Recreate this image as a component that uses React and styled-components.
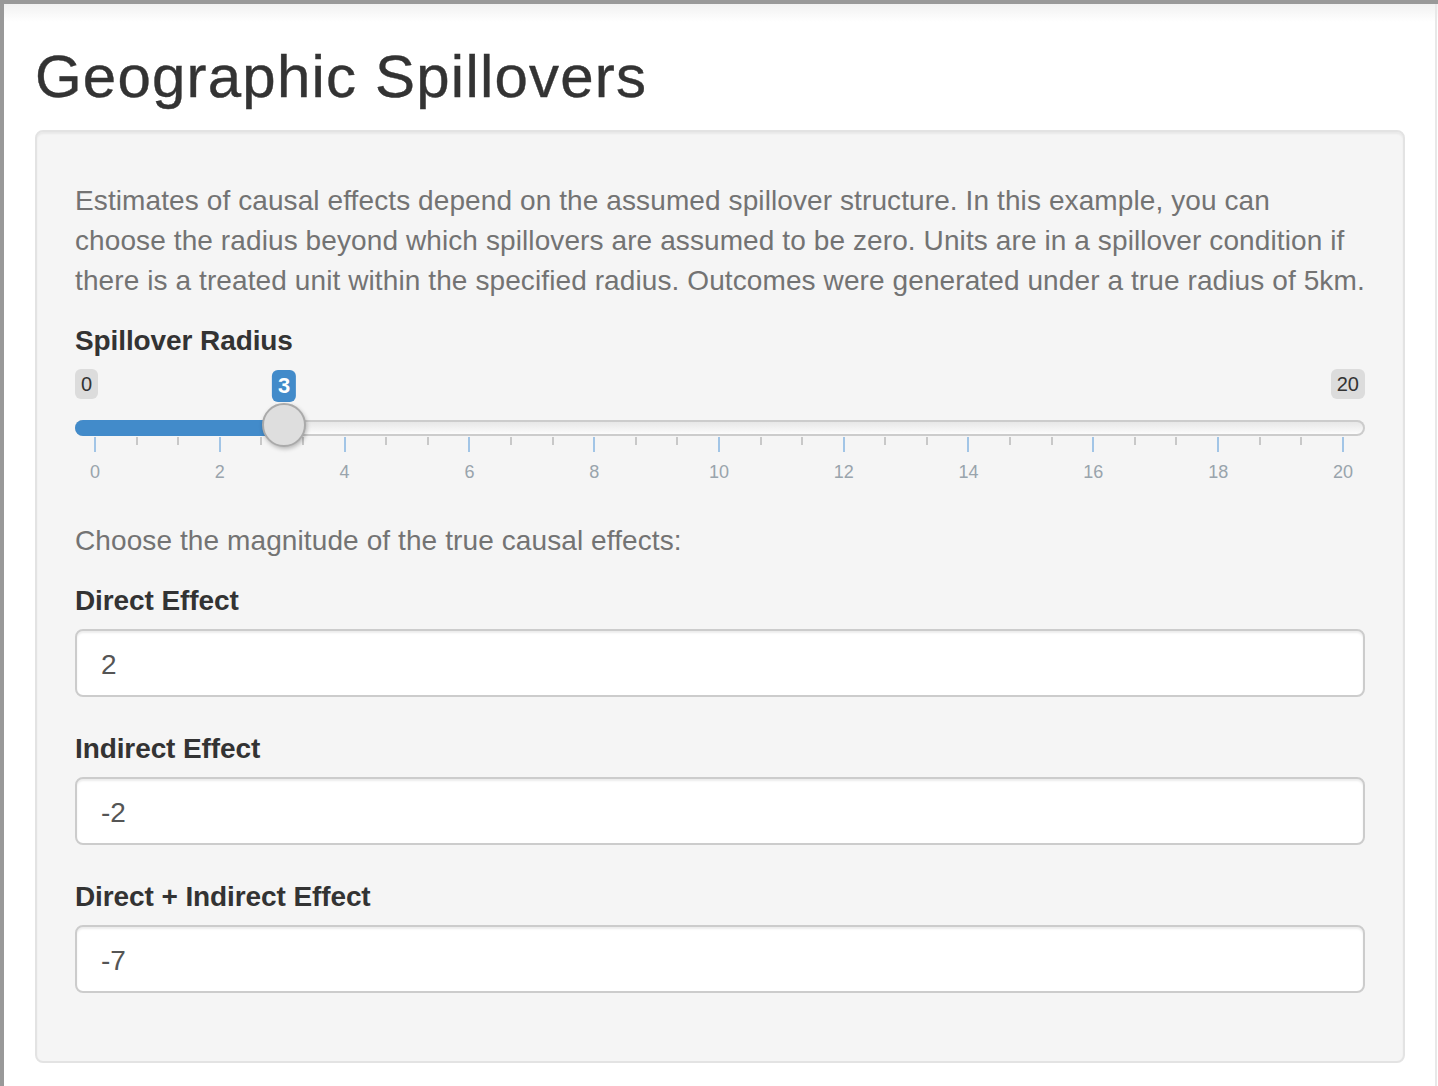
import styled, { createGlobalStyle } from "styled-components";

const GlobalStyle = createGlobalStyle`
  html, body {
    margin: 0;
    padding: 0;
    overflow: hidden;
    background: #fff;
  }
  * {
    box-sizing: border-box;
  }
`;

const Frame = styled.div`
  display: flex;
  min-height: 100vh;
  border-top: 4px solid #999;
  border-left: 4px solid #999;
  font-family: "Liberation Sans", Arial, sans-serif;
  color: #333;
  background: linear-gradient(#f1f1f1, #fff 18px);
`;

const Page = styled.div`
  flex: 1;
  padding: 0 30px 0 31px;
  margin-right: 1px;
  border-right: 2px solid #e8e8e8;
`;

const Title = styled.h2`
  margin: 40px 0 20px;
  font-size: 60px;
  line-height: 66px;
  font-weight: 400;
  letter-spacing: 1.2px;
  color: #333;
  -webkit-text-stroke: 0.4px #333;
`;

const Well = styled.div`
  background: #f5f5f5;
  border: 2px solid #e3e3e3;
  border-radius: 8px;
  padding: 38px;
  box-shadow: inset 0 2px 2px rgba(0, 0, 0, 0.05);
`;

const Text = styled.p`
  margin: ${(p) => (p.$first ? "9px" : "0")} 0 18px;
  padding-top: 2px;
  font-size: 28px;
  line-height: 40px;
  color: #737373;
  letter-spacing: 0.1px;
  white-space: nowrap;
`;

const FormGroup = styled.div`
  margin-bottom: 30px;
`;

const Label = styled.label`
  display: block;
  padding-top: 2px;
  margin-bottom: 8px;
  font-size: 28px;
  line-height: 40px;
  font-weight: 700;
  letter-spacing: -0.1px;
  color: #333;
`;

const Input = styled.input`
  display: block;
  width: 100%;
  height: 68px;
  padding: 14px 24px 10px;
  font-family: inherit;
  font-size: 28px;
  line-height: 40px;
  color: #555;
  background: #fff;
  border: 2px solid #ccc;
  border-radius: 8px;
  box-shadow: inset 0 2px 2px rgba(0, 0, 0, 0.075);
  outline: none;
`;

/* ---- range slider (ion.rangeSlider, shiny skin) ---- */

const Slider = styled.div`
  display: flex;
  flex-direction: column;
  height: 120px;
`;

const LabelRow = styled.div`
  position: relative;
  display: flex;
  justify-content: space-between;
  align-items: flex-start;
  height: 33px;
`;

const EdgeLabel = styled.span`
  padding: 2px 6px;
  font-size: 20px;
  line-height: 26px;
  color: #333;
  background: rgba(0, 0, 0, 0.1);
  border-radius: 6px;
`;

const ValueLabel = styled.span`
  position: absolute;
  top: 1px;
  transform: translateX(-50%);
  padding: 2px 6px;
  font-size: 22px;
  line-height: 28px;
  font-weight: 700;
  color: #fff;
  background: #428bca;
  border-radius: 6px;
`;

const Track = styled.div`
  position: relative;
  display: flex;
  margin-top: 18px;
  height: 16px;
  border-radius: 16px;
  background: linear-gradient(to bottom, #e4e4e4, #fff);
  box-shadow: inset 0 0 0 2px #ccc;
`;

const Fill = styled.div`
  height: 100%;
  background: #428bca;
  border-radius: 16px 0 0 16px;
`;

const Handle = styled.div`
  position: absolute;
  top: -17px;
  width: 44px;
  height: 44px;
  transform: translateX(-50%);
  border: 2px solid #aaa;
  border-radius: 50%;
  background: #dedede;
  box-shadow: 1px 2px 4px rgba(0, 0, 0, 0.25);
`;

const TickRow = styled.div`
  display: flex;
  justify-content: space-between;
  align-items: flex-start;
  margin-top: 1px;
  padding: 0 21px 0 19px;
  height: 15px;
`;

const Tick = styled.span`
  width: 2px;
  height: ${(p) => (p.$major ? "15px" : "8px")};
  background: ${(p) => (p.$major ? "#a2c5e6" : "#c8c8c8")};
`;

const TickTextRow = styled.div`
  display: flex;
  justify-content: space-between;
  margin-top: 9px;
  padding: 0 22px 0 20px;
`;

const TickText = styled.span`
  display: flex;
  justify-content: center;
  width: 0;
  font-size: 18px;
  line-height: 22px;
  color: #99a4ac;
`;

const MIN = 0;
const MAX = 20;
const VALUE = 3;
const HANDLE_X = 209;

const RangeSlider = () => {
  const ticks = Array.from({ length: 31 }, (_, i) => i % 3 === 0);
  const labels = Array.from({ length: 11 }, (_, i) => i * 2);

  return (
    <Slider>
      <LabelRow>
        <EdgeLabel>{MIN}</EdgeLabel>
        <ValueLabel style={{ left: HANDLE_X }}>{VALUE}</ValueLabel>
        <EdgeLabel>{MAX}</EdgeLabel>
      </LabelRow>
      <Track>
        <Fill style={{ width: HANDLE_X }} />
        <Handle style={{ left: HANDLE_X }} />
      </Track>
      <TickRow>
        {ticks.map((major, i) => (
          <Tick key={i} $major={major} />
        ))}
      </TickRow>
      <TickTextRow>
        {labels.map((v) => (
          <TickText key={v}>{v}</TickText>
        ))}
      </TickTextRow>
    </Slider>
  );
};

const fields = [
  { label: "Direct Effect", value: "2" },
  { label: "Indirect Effect", value: "-2" },
  { label: "Direct + Indirect Effect", value: "-7" },
];

export default function App() {
  return (
    <>
      <GlobalStyle />
      <Frame>
        <Page>
          <Title>Geographic Spillovers</Title>
          <Well>
            <Text $first>
              Estimates of causal effects depend on the assumed spillover structure. In this example, you can
              <br />
              choose the radius beyond which spillovers are assumed to be zero. Units are in a spillover condition if
              <br />
              there is a treated unit within the specified radius. Outcomes were generated under a true radius of 5km.
            </Text>
            <Label>Spillover Radius</Label>
            <FormGroup>
              <RangeSlider />
            </FormGroup>
            <Text>Choose the magnitude of the true causal effects:</Text>
            {fields.map((f) => (
              <FormGroup key={f.label}>
                <Label>{f.label}</Label>
                <Input type="text" defaultValue={f.value} readOnly />
              </FormGroup>
            ))}
          </Well>
        </Page>
      </Frame>
    </>
  );
}
